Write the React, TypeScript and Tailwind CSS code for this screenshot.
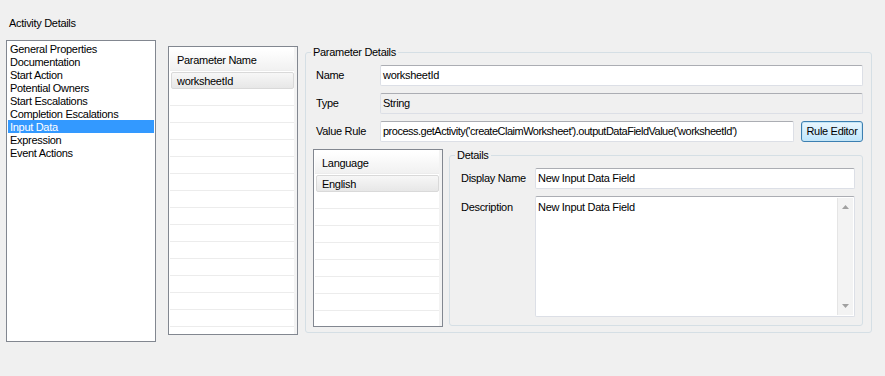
import React from "react";

const font = "font-['Liberation_Sans',Arial,sans-serif]";

function GridRows({ count }: { count: number }) {
  return (
    <>
      {Array.from({ length: count }).map((_, i) => (
        <div key={i} className="h-[17px] shrink-0 border-b border-[#ececec]" />
      ))}
    </>
  );
}

function DataGrid({
  header,
  value,
  rows,
  className,
}: {
  header: string;
  value: string;
  rows: number;
  className: string;
}) {
  return (
    <div className={`flex border border-[#828790] bg-white ${className}`}>
      <div className="flex min-w-0 flex-1 flex-col overflow-hidden pl-[1px] pt-[2px]">
        <div className="flex h-[22px] shrink-0 items-center bg-gradient-to-b from-white to-[#f1f1f1] pl-[7px] pt-[2px] border-b border-[#ececec]">
          {header}
        </div>
        <div className="mt-[1px] flex h-[17px] shrink-0 items-center rounded-[2px] border border-[#d9d9d9] bg-gradient-to-b from-[#f7f7f7] to-[#e7e7e7] pl-[5px] pt-[1px] ml-[1px]">
          {value}
        </div>
        <GridRows count={rows} />
      </div>
      <div className="w-[3px] shrink-0 bg-[#f3f3f3]" />
    </div>
  );
}

function GroupBox({
  title,
  className,
  children,
}: {
  title: string;
  className: string;
  children: React.ReactNode;
}) {
  return (
    <div className={`relative rounded-[3px] border border-[#d5dfe5] ${className}`}>
      <div className="absolute left-[5px] top-[-7px] bg-[#f0f0f0] px-[2px] leading-[13px]">
        {title}
      </div>
      {children}
    </div>
  );
}

function TextBox({
  value,
  className,
  disabled,
}: {
  value: string;
  className?: string;
  disabled?: boolean;
}) {
  return (
    <div
      className={`flex h-[21px] items-center rounded-[2px] border border-[#dcdfe6] border-t-[#abadb3] pl-[2px] whitespace-nowrap overflow-hidden ${
        disabled ? "bg-[#f0f0f0]" : "bg-white"
      } ${className ?? ""}`}
    >
      {value}
    </div>
  );
}

export default function App() {
  const items = [
    "General Properties",
    "Documentation",
    "Start Action",
    "Potential Owners",
    "Start Escalations",
    "Completion Escalations",
    "Input Data",
    "Expression",
    "Event Actions",
  ];
  return (
    <div
      className={`h-[376px] w-[885px] overflow-hidden bg-[#f0f0f0] pt-[16px] text-[11px] leading-[13px] tracking-[-0.3px] text-black ${font}`}
    >
      <div className="pl-[9px] pt-[1px]">Activity Details</div>
      <div className="mt-[10px] flex items-start pl-[6px]">
        {/* Left list box */}
        <div className="h-[302px] w-[150px] shrink-0 border border-[#828790] bg-white p-[1px]">
          {items.map((it) => (
            <div
              key={it}
              className={`h-[13px] pl-[2px] pt-[1px] leading-[13px] ${
                it === "Input Data" ? "bg-[#3399ff] text-white" : ""
              }`}
            >
              {it}
            </div>
          ))}
        </div>

        {/* Parameter grid */}
        <DataGrid
          header="Parameter Name"
          value="worksheetId"
          rows={14}
          className="ml-[12px] mt-[6px] h-[289px] w-[130px] shrink-0"
        />

        {/* Parameter Details */}
        <GroupBox
          title="Parameter Details"
          className="ml-[7px] mt-[12px] h-[281px] w-[567px] shrink-0"
        >
          <div className="flex flex-col pl-[7px] pr-[8px] pt-[12px]">
            <div className="flex flex-col gap-[7px] pl-[3px]">
              <div className="flex items-center">
                <div className="w-[64px] shrink-0">Name</div>
                <TextBox value="worksheetId" className="flex-1" />
              </div>
              <div className="flex items-center">
                <div className="w-[64px] shrink-0">Type</div>
                <TextBox value="String" className="flex-1" disabled />
              </div>
              <div className="flex items-center">
                <div className="w-[64px] shrink-0">Value Rule</div>
                <TextBox
                  value="process.getActivity('createClaimWorksheet').outputDataFieldValue('worksheetId')"
                  className="w-[414px] shrink-0 tracking-[-0.5px]"
                />
                <div className="ml-[7px] flex h-[21px] flex-1 items-center justify-center rounded-[3px] border border-[#3c7fb1] bg-gradient-to-b from-[#eaf6fd] to-[#bee6fd] shadow-[inset_0_0_0_1px_#c4e5f6]">
                  Rule Editor
                </div>
              </div>
            </div>

            <div className="mt-[7px] flex items-start">
              <DataGrid
                header="Language"
                value="English"
                rows={9}
                className="h-[178px] w-[130px] shrink-0"
              />
              <GroupBox title="Details" className="ml-[6px] mt-[6px] h-[171px] flex-1">
                <div className="flex flex-col pl-[11px] pr-[7px] pt-[12px]">
                  <div className="flex items-center">
                    <div className="w-[74px] shrink-0">Display Name</div>
                    <TextBox value="New Input Data Field" className="flex-1" />
                  </div>
                  <div className="mt-[7px] flex items-start">
                    <div className="w-[74px] shrink-0 pt-[5px]">Description</div>
                    <div className="flex h-[121px] flex-1 rounded-[2px] border border-[#dcdfe6] border-t-[#abadb3] bg-white">
                      <div className="flex-1 pl-[2px] pt-[4px]">New Input Data Field</div>
                      <div className="my-[1px] mr-[1px] flex w-[16px] flex-col items-center justify-between border-l border-[#e5e5e5] bg-[#f3f3f3] py-[7px]">
                        <svg width="7" height="4" viewBox="0 0 7 4">
                          <path d="M3.5 0 L7 4 L0 4 Z" fill="#a0a0a0" />
                        </svg>
                        <svg width="7" height="4" viewBox="0 0 7 4">
                          <path d="M0 0 L7 0 L3.5 4 Z" fill="#a0a0a0" />
                        </svg>
                      </div>
                    </div>
                  </div>
                </div>
              </GroupBox>
            </div>
          </div>
        </GroupBox>
      </div>
    </div>
  );
}
